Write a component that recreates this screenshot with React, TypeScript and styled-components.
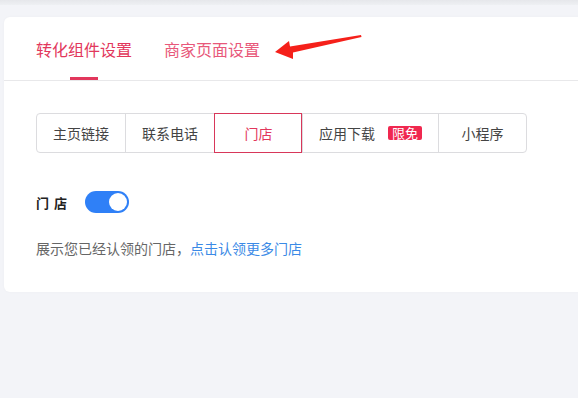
import React, { useState } from "react";
import styled, { createGlobalStyle } from "styled-components";

const Global = createGlobalStyle`
  html, body {
    margin: 0;
    padding: 0;
    background: #f3f4f8;
    font-family: "Noto Sans CJK SC", "Noto Sans", sans-serif;
    overflow: hidden;
  }
  * { box-sizing: border-box; }
`;

const Page = styled.div`
  position: relative;
  width: 578px;
  height: 398px;
  background: #f3f4f8;
  overflow: hidden;
`;

const TopShade = styled.div`
  height: 5px;
  background: linear-gradient(#e6e7eb, #eef0f3);
`;

const Card = styled.div`
  margin: 12px -20px 0 4px;
  height: 275px;
  background: #fff;
  border-radius: 6px;
  box-shadow: 0 0 3px rgba(0, 0, 0, 0.03);
`;

const TabBar = styled.div`
  display: flex;
  gap: 32px;
  height: 64px;
  padding: 0 0 0 32px;
  border-bottom: 1px solid #e8e8ea;
`;

const Tab = styled.div<{ $active?: boolean }>`
  position: relative;
  display: flex;
  align-items: center;
  padding-top: 1px;
  font-size: 16px;
  color: ${(p) => (p.$active ? "#e2375c" : "#e8587a")};
  &::after {
    content: "";
    display: ${(p) => (p.$active ? "block" : "none")};
    position: absolute;
    left: 50%;
    bottom: 0;
    width: 28px;
    height: 3px;
    margin-left: -14px;
    background: #e2375c;
  }
`;

const Body = styled.div`
  padding: 32px 0 0 32px;
`;

const Segments = styled.div`
  display: inline-flex;
  height: 40px;
  border: 1px solid #dcdcdf;
  border-radius: 4px;
`;

const Segment = styled.div<{ $active?: boolean }>`
  display: flex;
  align-items: center;
  justify-content: center;
  gap: 13px;
  min-width: 88px;
  padding: 0 16px;
  margin: -1px 0;
  font-size: 14px;
  color: ${(p) => (p.$active ? "#e2375c" : "#444")};
  border-left: 1px solid #dcdcdf;
  ${(p) =>
    p.$active
      ? `outline: 1px solid #d8375a; outline-offset: -1px; border-left-color: #d8375a; position: relative; z-index: 1;`
      : ""}
  &:first-child {
    border-left: none;
  }
`;

const Badge = styled.span`
  display: inline-block;
  padding: 0 4px;
  height: 14px;
  line-height: 14px;
  border-radius: 2px;
  background: #f0284f;
  color: #fff;
  font-size: 13px;
`;

const Row = styled.div`
  display: flex;
  align-items: center;
  gap: 13px;
  margin-top: 38px;
`;

const Label = styled.span`
  font-size: 13px;
  font-weight: bold;
  color: #222;
  letter-spacing: 5px;
`;

const Switch = styled.button<{ $on: boolean }>`
  position: relative;
  width: 44px;
  height: 22px;
  border: none;
  padding: 0;
  border-radius: 11px;
  background: ${(p) => (p.$on ? "#2f80f7" : "#cfd3d9")};
  cursor: pointer;
  &::after {
    content: "";
    position: absolute;
    top: 2px;
    left: ${(p) => (p.$on ? "24px" : "2px")};
    width: 18px;
    height: 18px;
    border-radius: 50%;
    background: #fff;
  }
`;

const Desc = styled.p`
  margin: 25px 0 0;
  font-size: 14px;
  color: #666;
`;

const Link = styled.a`
  color: #3b8ae6;
  text-decoration: none;
`;

const Arrow = styled.svg`
  position: absolute;
  left: 0;
  top: 0;
  pointer-events: none;
`;

export default function App() {
  const [on, setOn] = useState(true);
  const segs = ["主页链接", "联系电话", "门店", "应用下载", "小程序"];
  return (
    <Page>
      <Global />
      <TopShade />
      <Card>
        <TabBar>
          <Tab $active>转化组件设置</Tab>
          <Tab>商家页面设置</Tab>
        </TabBar>
        <Body>
          <Segments>
            {segs.map((s) => (
              <Segment key={s} $active={s === "门店"}>
                {s}
                {s === "应用下载" && <Badge>限免</Badge>}
              </Segment>
            ))}
          </Segments>
          <Row>
            <Label>门店</Label>
            <Switch $on={on} onClick={() => setOn(!on)} />
          </Row>
          <Desc>
            展示您已经认领的门店，<Link href="#">点击认领更多门店</Link>
          </Desc>
        </Body>
      </Card>
      <Arrow width="578" height="398" viewBox="0 0 578 398">
        <polygon
          points="275,52 289,41 290,46.5 361,35 361.5,37 293,52.5 293,59"
          fill="#f5201a"
        />
      </Arrow>
    </Page>
  );
}
